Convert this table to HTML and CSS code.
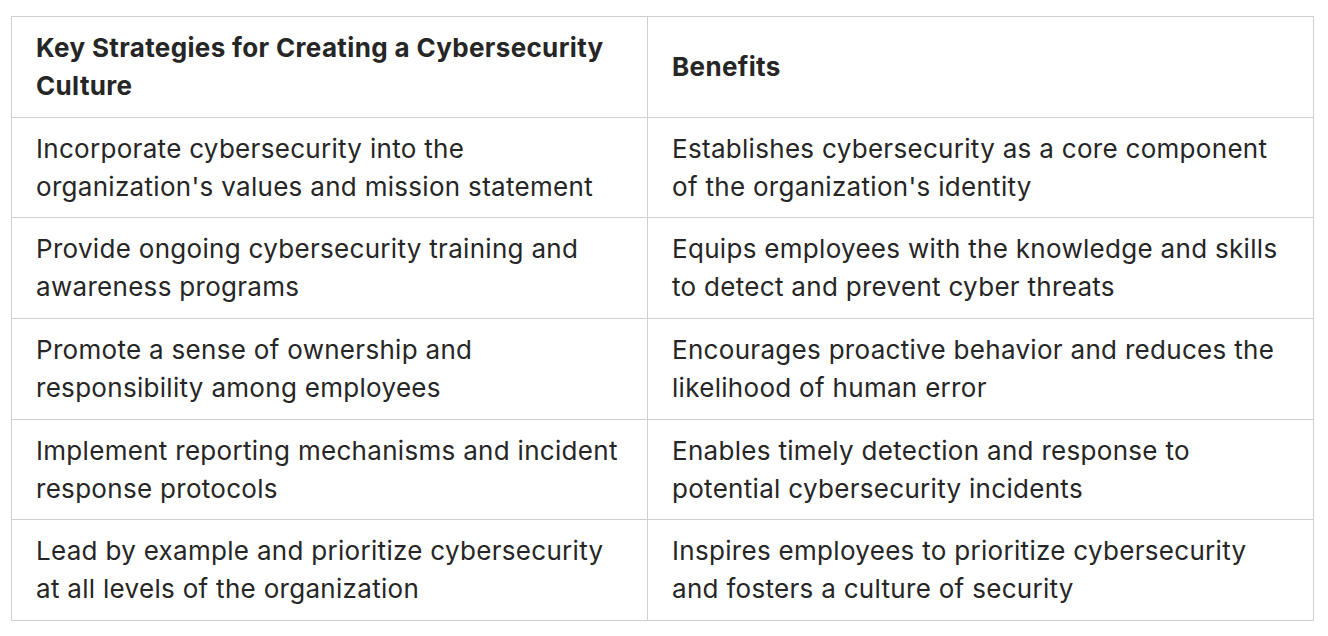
FILE: index.html
```html
<!DOCTYPE html>
<html lang="en">
<head>
<meta charset="utf-8">
<title>Cybersecurity Culture</title>
<link rel="stylesheet" href="styles.css">
</head>
<body>
<div class="wrap">
<table class="grid">
  <colgroup>
    <col class="c1">
    <col class="c2">
  </colgroup>
  <thead>
    <tr>
      <th>Key Strategies for Creating a Cybersecurity Culture</th>
      <th>Benefits</th>
    </tr>
  </thead>
  <tbody>
    <tr>
      <td>Incorporate cybersecurity into the organization's values and mission statement</td>
      <td>Establishes cybersecurity as a core component of the organization's identity</td>
    </tr>
    <tr>
      <td>Provide ongoing cybersecurity training and awareness programs</td>
      <td>Equips employees with the knowledge and skills to detect and prevent cyber threats</td>
    </tr>
    <tr>
      <td>Promote a sense of ownership and responsibility among employees</td>
      <td>Encourages proactive behavior and reduces the likelihood of human error</td>
    </tr>
    <tr>
      <td>Implement reporting mechanisms and incident response protocols</td>
      <td>Enables timely detection and response to potential cybersecurity incidents</td>
    </tr>
    <tr>
      <td>Lead by example and prioritize cybersecurity at all levels of the organization</td>
      <td>Inspires employees to prioritize cybersecurity and fosters a culture of security</td>
    </tr>
  </tbody>
</table>
</div>
</body>
</html>
```
FILE: styles.css
```css
html, body {
  margin: 0;
  padding: 0;
  background: #ffffff;
}
.wrap {
  padding: 16px 15px 0 11px;
}
.grid {
  width: 1302px;
  border-collapse: collapse;
  table-layout: fixed;
  font-family: Inter, "Noto Sans", sans-serif;
  font-size: 26px;
  line-height: 37.84px;
  letter-spacing: 0.3px;
  color: #262626;
}
.grid th,
.grid td {
  border: 1px solid #d0d0d0;
  padding: 12px 24px;
  text-align: left;
  vertical-align: middle;
}
.grid th {
  font-weight: 700;
  letter-spacing: 0.35px;
}
.c1 { width: 636px; }
.c2 { width: 666px; }
```
